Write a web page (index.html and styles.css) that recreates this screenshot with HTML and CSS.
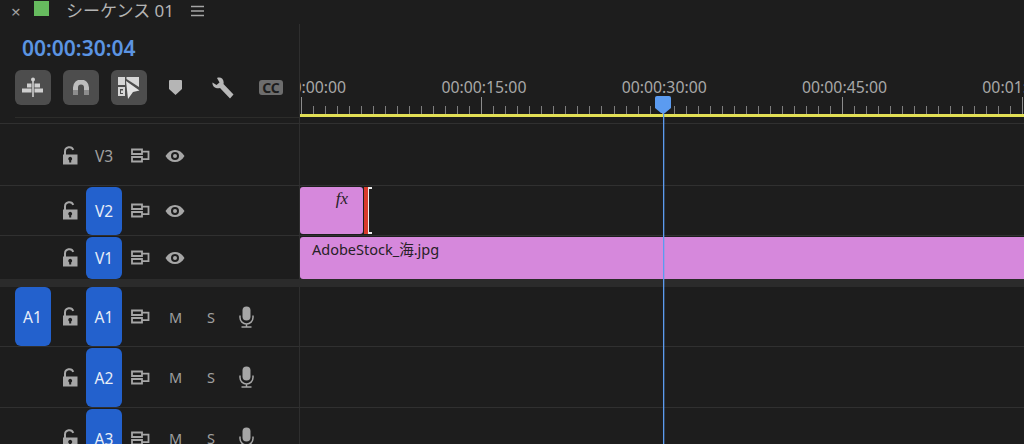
FILE: index.html
```html
<!DOCTYPE html>
<html lang="ja">
<head>
    <meta charset="UTF-8">
    <title>シーケンス 01</title>
    <link rel="stylesheet" href="styles.css">
</head>
<body>
    <svg class="sprites" width="0" height="0">
        <symbol id="lock" viewBox="0 0 16 19">
            <path d="M3 9V5.500a4.300 4.300 0 0 1 8.300-1.600" fill="none" stroke="currentColor" stroke-width="2"/>
            <path d="M1 8.500h14.500V18.500H1z M8.200 10.800a2 2 0 0 0-1 3.700v2h2v-2a2 2 0 0 0-1-3.700z" fill="currentColor" fill-rule="evenodd"/>
        </symbol>
        <symbol id="sync" viewBox="0 0 19 15">
            <path d="M1 1.500h10v4.500H1z M1 9h10v4.500H1z M11 3.700h6.500v7.500H11" fill="none" stroke="currentColor" stroke-width="1.800"/>
        </symbol>
        <symbol id="eye" viewBox="0 0 20 14">
            <path d="M0.500 7C3 3 6 1 10 1s7 2 9.500 6C17 11 14 13 10 13S3 11 .5 7z M10 3a4 4 0 1 0 0 8 4 4 0 0 0 0-8z" fill="currentColor" fill-rule="evenodd"/>
            <circle cx="10" cy="7" r="2" fill="currentColor"/>
        </symbol>
        <symbol id="mic" viewBox="0 0 15 22">
            <rect x="3.500" y="0.500" width="8" height="14" rx="4" fill="currentColor"/>
            <path d="M1 9.500v2a6.500 6.500 0 0 0 13 0v-2 M7.500 18v2.500 M2.500 21h10" fill="none" stroke="currentColor" stroke-width="1.500"/>
        </symbol>
    </svg>

    <div class="tabbar">
        <span class="tab-close">×</span>
        <span class="tab-color"></span>
        <span class="tab-title">シーケンス 01</span>
        <svg class="tab-menu" width="13" height="12" viewBox="0 0 13 12"><path d="M0 1.500h13M0 6h13M0 10.500h13" stroke="#a5a5a5" stroke-width="1.300"/></svg>
    </div>

    <div class="top">
        <div class="controls">
            <div class="timecode">00:00:30:04</div>
            <div class="tools">
                <button class="tool">
                    <svg width="24" height="24" viewBox="0 0 24 24">
                        <path d="M12 3v18" stroke="#cfcfcf" stroke-width="1.600"/>
                        <circle cx="12" cy="3.500" r="2" fill="#cfcfcf"/>
                        <path d="M6 7.500h4.500v4H6z M1 12.500h9.500v4H1z M13.500 7.500h5.500v4h-5.500z M13.500 12.500h8.500v4h-8.500z" fill="#cfcfcf"/>
                    </svg>
                </button>
                <button class="tool">
                    <svg width="16" height="15" viewBox="0 0 16 15">
                        <path d="M2.500 15V7.500a5.500 5.500 0 0 1 11 0V15" fill="none" stroke="#bdbdbd" stroke-width="5"/>
                        <path d="M0 10h5v5H0z M11 10h5v5h-5z" fill="#8c8c8c"/>
                    </svg>
                </button>
                <button class="tool">
                    <svg width="24" height="24" viewBox="0 0 24 24">
                        <path d="M1 1h7v8H1z M9.500 1H22v10L9.500 3z" fill="#d6d6d6"/>
                        <path d="M1 11h7v9H1z" fill="#d6d6d6"/>
                        <path d="M3 13h3v1.500H4v2.500h2v1H3z" fill="#4d4d4d"/>
                        <path d="M9 5l13.500 9.500-6.500 1.500-5 7z" fill="#e2e2e2"/>
                    </svg>
                </button>
                <svg class="marker" width="13" height="15" viewBox="0 0 13 15"><path d="M0 1a1 1 0 0 1 1-1h11a1 1 0 0 1 1 1v8l-6.500 6L0 9z" fill="#b5b5b5"/></svg>
                <svg class="wrench" width="22" height="22" viewBox="0 0 22 22">
                    <path d="M.5 5.500L4.500 8 7.500 5.500 5 1C9 -.5 12.500 2.500 11.500 7L21.500 17.500 18 21.500 8 11C4 12 0 9.500 .5 5.500z" fill="#b8b8b8"/>
                </svg>
                <span class="cc">CC</span>
            </div>
        </div>
        <div class="ruler">
            <div class="ruler-labels">
                <span>00:00:00:00</span>
                <span>00:00:15:00</span>
                <span>00:00:30:00</span>
                <span>00:00:45:00</span>
                <span>00:01:00:00</span>
            </div>
            <div class="ticks"></div>
            <div class="work-area"></div>
        </div>
    </div>

    <div class="track v3">
        <div class="head">
            <span></span><span></span>
            <svg class="ico"><use href="#lock" x="3" width="16" height="19"/></svg>
            <span class="name">V3</span>
            <svg class="ico"><use href="#sync" width="19" height="15" y="2"/></svg>
            <svg class="ico"><use href="#eye" x="-1" width="20" height="14" y="3"/></svg>
        </div>
        <div class="lane"></div>
    </div>
    <div class="track v2">
        <div class="head">
            <span></span><span></span>
            <svg class="ico"><use href="#lock" x="3" width="16" height="19"/></svg>
            <span class="name on">V2</span>
            <svg class="ico"><use href="#sync" width="19" height="15" y="2"/></svg>
            <svg class="ico"><use href="#eye" x="-1" width="20" height="14" y="3"/></svg>
        </div>
        <div class="lane">
            <div class="clip clip-fx"><i>fx</i></div>
            <div class="clip-end"></div>
        </div>
    </div>
    <div class="track v1">
        <div class="head">
            <span></span><span></span>
            <svg class="ico"><use href="#lock" x="3" width="16" height="19"/></svg>
            <span class="name on">V1</span>
            <svg class="ico"><use href="#sync" width="19" height="15" y="2"/></svg>
            <svg class="ico"><use href="#eye" x="-1" width="20" height="14" y="3"/></svg>
        </div>
        <div class="lane">
            <div class="clip clip-main">AdobeStock_海.jpg</div>
        </div>
    </div>

    <div class="divider"></div>

    <div class="track a1">
        <div class="head">
            <span></span><span class="name on">A1</span>
            <svg class="ico"><use href="#lock" x="3" width="16" height="19"/></svg>
            <span class="name on">A1</span>
            <svg class="ico"><use href="#sync" width="19" height="15" y="2"/></svg>
            <span class="btn">M</span>
            <span class="btn">S</span>
            <svg class="ico ico-mic"><use href="#mic" width="15" height="22"/></svg>
        </div>
        <div class="lane"></div>
    </div>
    <div class="track a2">
        <div class="head">
            <span></span><span></span>
            <svg class="ico"><use href="#lock" x="3" width="16" height="19"/></svg>
            <span class="name on">A2</span>
            <svg class="ico"><use href="#sync" width="19" height="15" y="2"/></svg>
            <span class="btn">M</span>
            <span class="btn">S</span>
            <svg class="ico ico-mic"><use href="#mic" width="15" height="22"/></svg>
        </div>
        <div class="lane"></div>
    </div>
    <div class="track a3">
        <div class="head">
            <span></span><span></span>
            <svg class="ico"><use href="#lock" x="3" width="16" height="19"/></svg>
            <span class="name on">A3</span>
            <svg class="ico"><use href="#sync" width="19" height="15" y="2"/></svg>
            <span class="btn">M</span>
            <span class="btn">S</span>
            <svg class="ico ico-mic"><use href="#mic" width="15" height="22"/></svg>
        </div>
        <div class="lane"></div>
    </div>

    <div class="playhead">
        <svg width="18" height="18" viewBox="0 0 18 18"><path d="M1 2a2 2 0 0 1 2-2h12a2 2 0 0 1 2 2v10l-6 5H7l-6-5z" fill="#5b9bf0"/></svg>
    </div>
</body>
</html>
```

FILE: styles.css
```css
body {
    margin: 0;
    height: 444px;
    overflow: hidden;
    position: relative;
    background: #1d1d1d;
    color: #a9a9a9;
    font-family: "Noto Sans", "Noto Sans CJK JP", sans-serif;
}
.sprites {
    position: absolute;
}

/* tab */
.tabbar {
    height: 24px;
    display: flex;
    align-items: flex-start;
}
.tab-close {
    margin-left: 11px;
    width: 23px;
    font-size: 17px;
    line-height: 24px;
    color: #a0a0a0;
}
.tab-color {
    width: 15px;
    height: 15px;
    margin-top: 1px;
    background: #66bb5e;
}
.tab-title {
    margin-left: 17px;
    width: 125px;
    font-size: 17px;
    line-height: 21px;
    color: #b4b4b4;
}
.tab-menu {
    margin-top: 5px;
}

/* timecode, tools and ruler */
.top {
    display: flex;
    height: 99px;
    border-bottom: 1px solid #303030;
}
.controls {
    width: 299px;
    border-right: 1px solid #2e2e2e;
}
.timecode {
    margin: 12px 0 0 22px;
    height: 34px;
    font-size: 21px;
    font-weight: 600;
    line-height: 24px;
    color: #5b94e2;
}
.tools {
    margin-left: 15px;
    padding-bottom: 12px;
    border-bottom: 1px solid #2c2c2a;
    display: flex;
    align-items: center;
}
.tool {
    width: 36px;
    height: 35px;
    padding: 0;
    margin-right: 12px;
    border: none;
    border-radius: 6px;
    background: #4d4d4d;
    display: flex;
    align-items: center;
    justify-content: center;
}
.marker {
    margin-left: 10px;
}
.wrench {
    margin-left: 30px;
}
.cc {
    margin-left: 25px;
    width: 24px;
    height: 15px;
    border-radius: 3px;
    background: #6d6d6d;
    color: #1d1d1d;
    font-size: 14px;
    font-weight: 700;
    line-height: 15px;
    text-align: center;
}
.ruler {
    flex: 1;
    min-width: 0;
    overflow: hidden;
}
.ruler-labels {
    display: flex;
    margin: 53px 0 0 -86.500px;
    height: 20px;
    font-size: 15.800px;
    line-height: 20px;
    color: #a8a8a8;
}
.ruler-labels span {
    flex: 0 0 180.300px;
    text-align: center;
}
.ticks {
    height: 17px;
    background:
        repeating-linear-gradient(90deg, #8c8c8c 0 1px, transparent 1px 180.300px) 1px 0 / 100% 17px no-repeat,
        repeating-linear-gradient(90deg, #7d7d7d 0 1px, transparent 1px 12.020px) 1px 9px / 100% 8px no-repeat;
}
.work-area {
    height: 3px;
    background: #e2df55;
}

/* tracks */
.track {
    display: flex;
    border-bottom: 1px solid #303030;
    box-sizing: border-box;
}
.v3 { height: 62px; }
.v2 { height: 50px; }
.v1 { height: 43px; border-bottom: none; }
.a1 { height: 60px; }
.a2 { height: 61px; }
.a3 { height: 61px; }
.divider {
    height: 8px;
    background: #2b2b2b;
}
.head {
    width: 299px;
    flex: none;
    border-right: 1px solid #2e2e2e;
    display: grid;
    grid-template-columns: 15px 35px 36px 36px 36px 35px 36px 35px;
    align-items: center;
    justify-items: center;
}
.v3 .head {
    padding-top: 2px;
}
.ico {
    width: 19px;
    height: 19px;
    overflow: visible;
    color: #a6a6a6;
}
.ico-mic {
    height: 22px;
    width: 15px;
}
.name {
    font-size: 15.500px;
    color: #a0a0a0;
    width: 36px;
    text-align: center;
}
.name.on {
    align-self: stretch;
    margin: 1px 0 0;
    border-radius: 6px;
    background: #2361cd;
    color: #e8eef8;
    display: flex;
    align-items: center;
    justify-content: center;
}
.a1 .name.on {
    margin-top: 0;
}
.btn {
    font-size: 14.500px;
    color: #a0a0a0;
}
.lane {
    flex: 1;
    min-width: 0;
    display: flex;
}
.clip {
    background: #d688dc;
    color: #262126;
    border-radius: 3px;
    box-sizing: border-box;
}
.clip-fx {
    width: 63px;
    margin: 1px 0;
    padding: 1px 15px 0 0;
    text-align: right;
    font-family: "Liberation Serif", serif;
    font-size: 17px;
    line-height: 22px;
}
.clip-end {
    width: 8px;
    margin: 1px 0 1px 1px;
    background:
        linear-gradient(#ececec, #ececec) right top / 4px 2px no-repeat,
        linear-gradient(#ececec, #ececec) right bottom / 4px 2px no-repeat,
        linear-gradient(#ececec, #ececec) 4px 0 / 1px 100% no-repeat,
        linear-gradient(#d8392b, #d8392b) 0 0 / 4px 100% no-repeat;
}
.clip-main {
    flex: 1;
    margin: 1px -4px 0 0;
    padding: 2px 0 0 12px;
    font-size: 14.500px;
    line-height: 20px;
}

/* playhead sits over the tracks */
.playhead {
    position: absolute;
    left: 663px;
    top: 113px;
    bottom: 0;
    width: 1px;
    background: #5b9bf0;
    box-shadow: 1px 0 rgba(91, 155, 240, 0.3);
}
.playhead svg {
    position: absolute;
    left: -9px;
    top: -17px;
}
```
